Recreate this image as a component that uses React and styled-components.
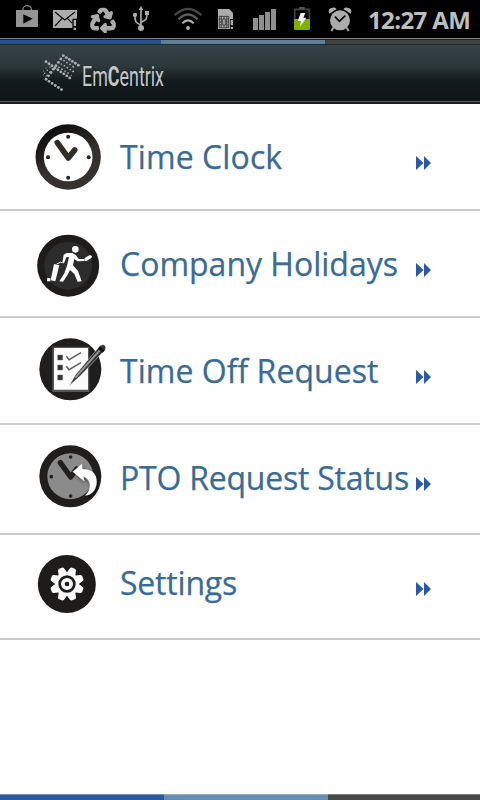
import React from "react";
import styled, { createGlobalStyle } from "styled-components";
import { FaRecycle } from "react-icons/fa";

const GlobalStyle = createGlobalStyle`
  html,
  body {
    margin: 0;
    background: #fff;
  }
`;

const Screen = styled.div`
  display: flex;
  flex-direction: column;
  width: 480px;
  height: 800px;
  overflow: hidden;
  background: #fff;
  font-family: "Open Sans", "Noto Sans", sans-serif;
`;

const StatusBar = styled.div`
  display: flex;
  height: 38px;
  background: #000;
  svg {
    flex: none;
    display: block;
  }
`;

const Time = styled.time`
  padding-left: 8px;
  color: #bebebe;
  font-size: 24px;
  font-weight: 700;
  line-height: 39px;
  letter-spacing: -0.6px;
  white-space: nowrap;
`;

const Stripe = styled.div`
  display: flex;
  flex: none;
  box-sizing: border-box;
  height: ${props => props.$height}px;
  div:nth-child(1) {
    width: ${props => props.$first}px;
    background: ${props => props.$colors[0]};
  }
  div:nth-child(2) {
    width: 164px;
    background: ${props => props.$colors[1]};
  }
  div:nth-child(3) {
    flex: 1;
    background: ${props => props.$colors[2]};
  }
`;

const TopStripe = styled(Stripe)`
  border-top: 1px solid #827a78;
  border-bottom: 1px solid #1c2a33;
  box-shadow: inset 0 1px 0 #222;
  padding-top: 1px;
`;

const BottomStripe = styled(Stripe)`
  margin-top: auto;
  div {
    box-shadow: inset 0 1px 0 rgba(255, 255, 255, 0.3);
  }
`;

const Header = styled.header`
  flex: none;
  box-sizing: border-box;
  height: 59px;
  padding-left: 36px;
  background: linear-gradient(#374347 0, #2b3639 22px, #111a1c 36px, #0f1719);
  border-bottom: 2px solid #1b1f20;
  box-shadow: inset 0 -1px 0 #596162;
  svg {
    display: block;
  }
`;

const Menu = styled.ul`
  list-style: none;
  margin: 0;
  padding: 0;
`;

const Row = styled.li`
  display: flex;
  box-sizing: border-box;
  height: ${props => props.$height}px;
  padding: 12px 0 0 30px;
  border-bottom: 2px solid #cbcbcb;
`;

const Label = styled.span`
  width: 306px;
  padding-left: 10px;
  box-sizing: border-box;
  margin-top: ${props => (props.$raised ? 13 : 18)}px;
  color: #396b94;
  font-size: 32px;
  line-height: 45px;
  letter-spacing: ${props => props.$spacing}px;
  -webkit-text-stroke: 0.25px #396b94;
  white-space: nowrap;
`;

const Arrow = styled.svg`
  width: 16px;
  height: 14px;
  margin-top: ${props => (props.$raised ? 35 : 40)}px;
  fill: #2c59a3;
`;

// status icons are drawn in thirds of a pixel along the whole bar
const StatusIcon = ({ from, to, children }) => (
  <svg
    width={to - from}
    height="38"
    viewBox={`${from * 3} 0 ${(to - from) * 3} 114`}
    fill="#acacac"
  >
    {children}
  </svg>
);

const StatusIcons = () => (
  <>
    <StatusIcon from={0} to={45}>
      <path d="M69 30V27a12.500 10 0 0 1 25 0V30" fill="none" stroke="#8d8d8d" strokeWidth="3.500" />
      <path d="M48 30H114V81H48Z" fill="#949494" />
      <path d="M70 43L98 56.500L70 71Z" fill="#050505" />
    </StatusIcon>
    <StatusIcon from={45} to={82}>
      <path d="M159 30H231V56H217V84H159Z" />
      <path
        d="M165 36L194 60L225 36M165 78L186 55M202 55L216 69"
        fill="none"
        stroke="#080808"
        strokeWidth="3.500"
      />
      <path d="M221 60H228V78H221ZM221 83H228V90H221Z" />
    </StatusIcon>
    <StatusIcon from={82} to={125}>
      <FaRecycle x="271" y="23" size="76" color="#acacac" stroke="#acacac" strokeWidth="26" />
    </StatusIcon>
    <StatusIcon from={125} to={160}>
      <path
        d="M423 27V84M423 76C407 67 405 67 405 47M423 67C439 60 441 58 441 40"
        fill="none"
        stroke="#acacac"
        strokeWidth="5"
      />
      <path d="M423 18L430 30H416ZM435 33H447V45H435Z" />
      <circle cx="405" cy="45" r="6.500" />
      <circle cx="423" cy="84" r="9" />
    </StatusIcon>
    <StatusIcon from={160} to={210}>
      <g fill="none" strokeWidth="6.500">
        <path d="M524 46Q564 8 604 46" stroke="#484848" />
        <path d="M535 58Q564 29 593 58" stroke="#5c5c5c" />
        <path d="M547 70Q564 52 581 70" stroke="#acacac" />
      </g>
      <circle cx="564" cy="84" r="6" />
    </StatusIcon>
    <StatusIcon from={210} to={243}>
      <path d="M654 27H688L699 39V57H690V87H654Z" />
      <path
        d="M658 49H686V83H658ZM664 49V83M680 49V83M658 57H664M658 66H664M658 75H664M680 57H686M680 66H686M680 75H686M668 57H676V75H668ZM672 49V57M672 75V83"
        fill="none"
        stroke="#151515"
        strokeWidth="2"
      />
      <path d="M692 60H699V76H692ZM692 81H699V87H692Z" />
    </StatusIcon>
    <StatusIcon from={243} to={285}>
      <path d="M759 54H774V90H759ZM777 45H792V90H777ZM795 36H810V90H795ZM813 27H828V90H813Z" fill="#8f8f8f" />
    </StatusIcon>
    <StatusIcon from={285} to={320}>
      <path d="M884 57V28H928V57" fill="none" stroke="#444" strokeWidth="5" />
      <path d="M898 21H914V27H898Z" fill="#555" />
      <path d="M882 57H930V86Q930 90 926 90H886Q882 90 882 86Z" fill="#7fb000" />
      <path d="M902 39H916L910 53H919L900 81L903 63H893Z" fill="#f2f2f2" />
    </StatusIcon>
    <StatusIcon from={320} to={360}>
      <circle cx="1020" cy="61" r="30" />
      <path d="M988 41Q982 28 994 24Q1004 20 1010 27ZM1052 41Q1058 28 1046 24Q1036 20 1030 27Z" />
      <path d="M1001 82L994 93M1039 82L1046 93" stroke="#acacac" strokeWidth="6" />
      <path d="M1005 50L1018 64L1036 47" fill="none" stroke="#050505" strokeWidth="5" />
    </StatusIcon>
  </>
);

const line = (x, y, dx, dy, count, r) =>
  Array.from({ length: count }, (_, i) => [x + dx * i, y + dy * i, r]);

const dots = [
  ...line(82, 23, -7.4, 10.1, 8, 4.3),
  ...line(91, 29, 9, 5.6, 5, 4.3),
  ...line(30, 41, 8.9, 6.1, 9, 4.3),
  ...line(39, 100, 9.4, 6.2, 5, 4.3),
  ...line(84, 38, 9, 5.6, 4, 2.6),
  ...line(76, 48, 9, 5.6, 5, 2.6),
  ...line(69, 58, 9, 5.6, 4, 2.6),
  ...line(112, 58, -3, 12, 3, 1.8),
  ...line(42, 58, -8, 9, 3, 2.2),
  ...line(49, 64, -8, 9, 3, 2.2),
  ...line(30, 60, -8, 9, 2, 1.6),
  ...line(22, 80, 8, 5, 2, 1.6)
];

const Logo = () => (
  <svg width="160" height="56" viewBox="0 -9 480 168" fill="#a9aeae">
    {dots.map(([x, y, r], i) => (
      <circle key={i} cx={x} cy={y} r={r} />
    ))}
    <text
      x="138"
      y="115"
      fontFamily="Roboto, sans-serif"
      fontSize="83"
      fill="#c3c6c6"
      textLength="246"
      lengthAdjust="spacingAndGlyphs"
    >
      Em<tspan fontWeight="700">C</tspan>entrix
    </text>
  </svg>
);

const MenuIcon = ({ top, children }) => (
  <svg width="80" height="80" viewBox={`30 ${top} 240 240`}>
    {children}
  </svg>
);

const ClockIcon = () => (
  <MenuIcon top={18}>
    <defs>
      <linearGradient id="rim" x1="0.2" y1="0" x2="0.5" y2="0.6">
        <stop offset="0" stopColor="#080808" />
        <stop offset="1" stopColor="#35312f" />
      </linearGradient>
    </defs>
    <circle cx="144.500" cy="141" r="98" fill="url(#rim)" />
    <circle cx="144.500" cy="141" r="73" fill="#fff" />
    <g fill="#24211f">
      <circle cx="144.500" cy="80" r="6" />
      <circle cx="84" cy="142" r="6" />
      <circle cx="206" cy="142" r="6" />
      <circle cx="144.500" cy="203" r="6" />
    </g>
    <path
      d="M112 98L145 144L164 120"
      fill="none"
      stroke="#302c2a"
      strokeWidth="17"
      strokeLinecap="round"
      strokeLinejoin="round"
    />
  </MenuIcon>
);

const HolidayIcon = () => (
  <MenuIcon top={9}>
    <circle cx="144.500" cy="137" r="93" fill="#1d1c1a" />
    <circle cx="144.500" cy="137" r="72" fill="#2c2c2c" />
    <g fill="#fff">
      <circle cx="166" cy="88" r="10" />
      <path d="M140 99L157 99L168 106L176 117L193 117L193 123L172 124L163 117L159 136L174 153L185 184L173 185L163 162L150 150L143 164L129 185L118 184L133 160L141 137L147 111L139 112L132 130L127 129L131 104Z" />
      <path d="M194 114L210 105L216 109L214 114L199 123L193 122Z" />
      <path d="M102 132L118 136L106 184L92 181Z" />
      <path d="M110 132L121 127L127 128" fill="none" stroke="#fff" strokeWidth="3" />
      <path d="M82 173L91 175V184H81Z" />
    </g>
  </MenuIcon>
);

const RequestIcon = () => (
  <MenuIcon top={15}>
    <circle cx="151" cy="133" r="93" fill="#1f1e1c" />
    <path d="M97 65H208V201H97Z" fill="#555" />
    <path d="M102 69H204V194H102Z" fill="#fbfbfb" />
    <path d="M113 90H128V105H113ZM113 120H128V135H113ZM113 150H128V165H113Z" fill="#333" stroke="#777" strokeWidth="1.500" />
    <path
      d="M139 94L147 104L183 83M139 124L147 134L183 113"
      fill="none"
      stroke="#626262"
      strokeWidth="4.500"
    />
    <path d="M148 182L166 150L235 68Q240 58 250 59Q260 63 256 74L249 81L181 152Z" fill="#333" stroke="#eee" strokeWidth="1.500" />
    <path d="M166 158L225 92L239 77" fill="none" stroke="#969696" strokeWidth="6" />
    <path d="M237 67L251 80" stroke="#151515" strokeWidth="9" />
  </MenuIcon>
);

const StatusClockIcon = () => (
  <MenuIcon top={6}>
    <defs>
      <filter id="shade" x="-30%" y="-30%" width="160%" height="160%">
        <feDropShadow dx="3" dy="6" stdDeviation="6" floodOpacity="0.5" />
      </filter>
    </defs>
    <circle cx="151" cy="124" r="93" fill="#1f1e1c" />
    <circle cx="151" cy="124" r="69" fill="#8b8b8b" />
    <g fill="#24211f">
      <circle cx="152" cy="66" r="5.500" />
      <circle cx="94" cy="125" r="5.500" />
      <circle cx="152" cy="183" r="5.500" />
    </g>
    <path
      d="M121 83L152 126L170 102"
      fill="none"
      stroke="#211f1d"
      strokeWidth="16"
      strokeLinecap="round"
      strokeLinejoin="round"
    />
    <path
      d="M158 110L186 86L187 103C215 101 230 116 230 140C230 165 214 180 195 182C212 168 219 137 190 124L193 139Z"
      fill="#fff"
      filter="url(#shade)"
    />
  </MenuIcon>
);

const SettingsIcon = () => (
  <MenuIcon top={21}>
    <circle cx="140.500" cy="132" r="87" fill="#1d1c1a" />
    <g fill="#fff">
      {[22.5, 67.5, 112.5, 157.5, 202.5, 247.5, 292.5, 337.5].map(angle => (
        <path
          key={angle}
          d="M127 102L131 86Q132 81 137 81H145Q150 81 151 86L155 102Z"
          transform={`rotate(${angle} 141 132)`}
        />
      ))}
      <circle cx="141" cy="132" r="36" />
    </g>
    <circle cx="141" cy="132" r="22" fill="none" stroke="#1d1c1a" strokeWidth="8" />
    <circle cx="141" cy="132" r="7" fill="#1d1c1a" />
  </MenuIcon>
);

const items = [
  { label: "Time Clock", Icon: ClockIcon, height: 107, spacing: 0.1 },
  { label: "Company Holidays", Icon: HolidayIcon, height: 107, spacing: 0 },
  { label: "Time Off Request", Icon: RequestIcon, height: 107, spacing: 0.03 },
  { label: "PTO Request Status", Icon: StatusClockIcon, height: 110, spacing: -0.22 },
  { label: "Settings", Icon: SettingsIcon, height: 105, spacing: -0.2, raised: true }
];

const App = () => (
  <>
    <GlobalStyle />
    <Screen>
      <StatusBar>
        <StatusIcons />
        <Time>12:27 AM</Time>
      </StatusBar>
      <TopStripe $height={7} $first={161} $colors={["#28519a", "#5c8199", "#414141"]}>
        <div />
        <div />
        <div />
      </TopStripe>
      <Header>
        <Logo />
      </Header>
      <Menu>
        {items.map(({ label, Icon, height, spacing, raised }) => (
          <Row key={label} $height={height}>
            <Icon />
            <Label $spacing={spacing} $raised={raised}>
              {label}
            </Label>
            <Arrow $raised={raised} viewBox="0 0 16 14">
              <path d="M0 0L7.500 7L0 14ZM8 0L15 7L8 14Z" />
            </Arrow>
          </Row>
        ))}
      </Menu>
      <BottomStripe $height={6} $first={164} $colors={["#2c59a0", "#668eb0", "#484848"]}>
        <div />
        <div />
        <div />
      </BottomStripe>
    </Screen>
  </>
);

export default App;
